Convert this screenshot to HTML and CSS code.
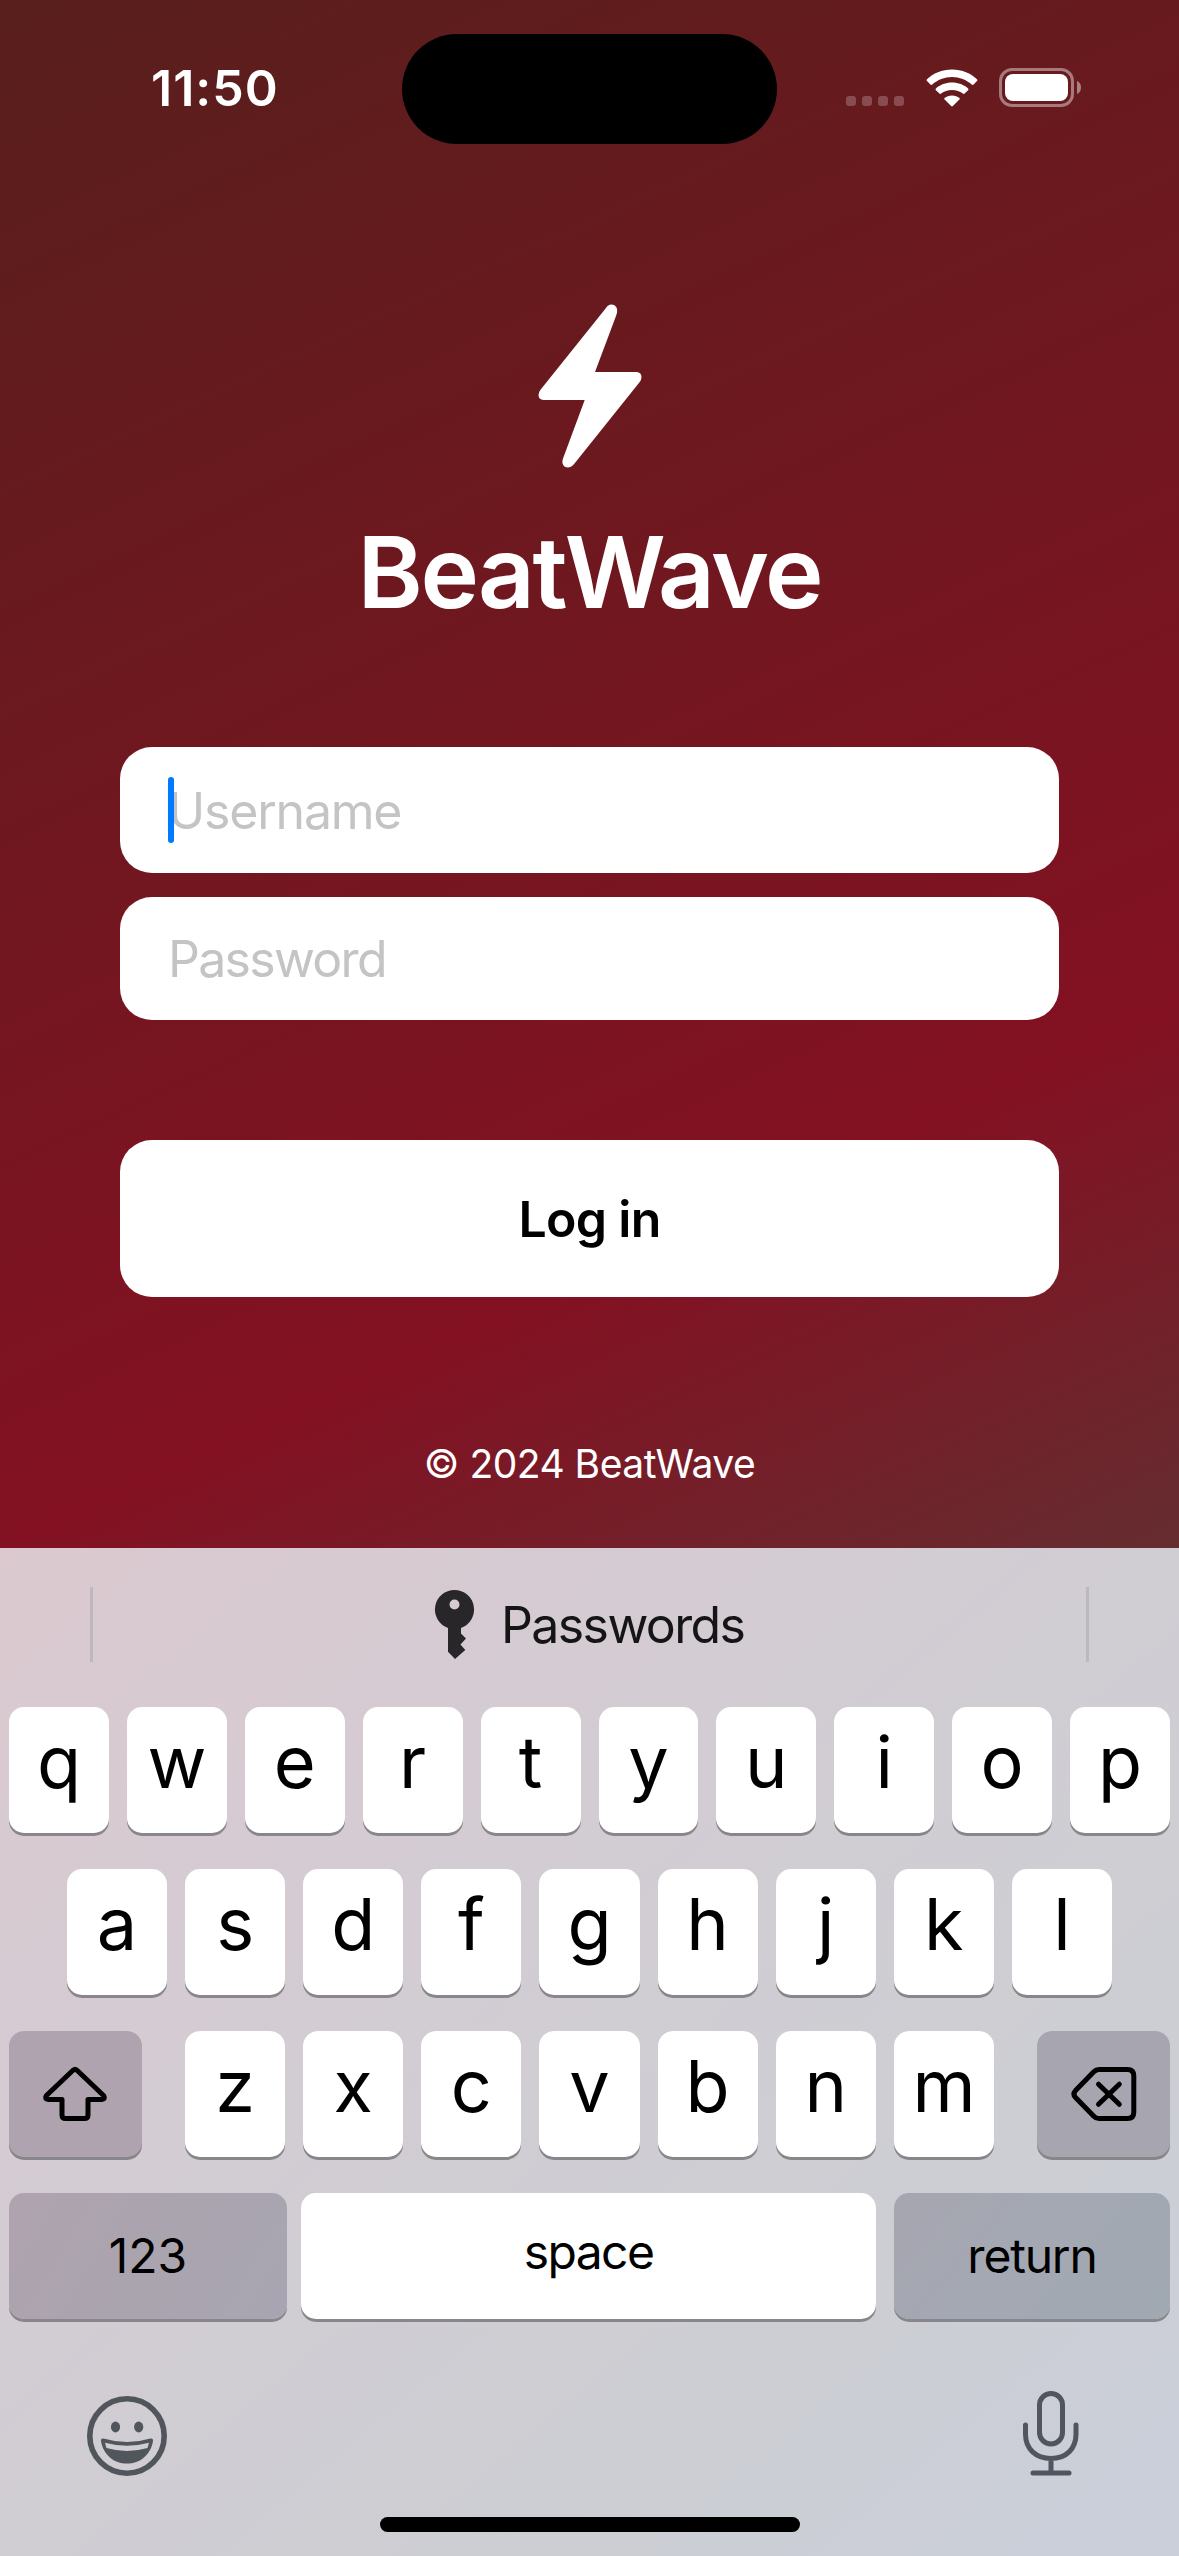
FILE: index.html
```html
<!DOCTYPE html>
<html lang="en">
<head>
<meta charset="utf-8">
<title>BeatWave</title>
<link rel="stylesheet" href="styles.css">
</head>
<body>
<div class="screen">
  <header class="status">
    <div class="time"><span>11:50</span></div>
    <div class="island"></div>
    <div class="indicators">
      <svg class="dots" viewBox="0 0 58 10"><rect width="10" height="10" rx="3.2"/><rect x="16" width="10" height="10" rx="3.2"/><rect x="32" width="10" height="10" rx="3.2"/><rect x="48" width="10" height="10" rx="3.2"/></svg>
      <svg class="wifi" viewBox="0 0 52 38"><path d="M26 .5C36 .5 45 4.400 51 10.300Q52 11.200 51 12.100L47.600 15.500Q46.700 16.400 45.700 15.500C40.500 10.900 33.500 8 26 8S11.500 10.900 6.300 15.500Q5.300 16.400 4.400 15.500L1 12.100Q0 11.200 1 10.300C7 4.400 16 .5 26 .5Z"/><path d="M26 13.500C32.300 13.500 38 15.700 42.100 19.400Q43 20.300 42.100 21.200L38.600 24.600Q37.800 25.400 36.800 24.600C34 22.300 30.200 21 26 21S18 22.300 15.200 24.600Q14.200 25.400 13.400 24.600L9.900 21.200Q9 20.300 9.900 19.400C14 15.700 19.700 13.500 26 13.500Z"/><path d="M26 26.500C29 26.500 31.500 27.400 33.400 28.900Q34.200 29.700 33.400 30.600L26.900 37Q26 37.800 25.100 37L18.600 30.600Q17.800 29.700 18.600 28.900C20.500 27.400 23 26.500 26 26.500Z"/></svg>
      <svg class="battery" viewBox="0 0 82 39"><rect class="shell" x="1.500" y="1.500" width="72" height="36" rx="11.500"/><rect x="6" y="6" width="63" height="27" rx="8"/><path class="nub" d="M78 13C80.600 14 82 16.500 82 19.500S80.600 25 78 26Z"/></svg>
    </div>
  </header>

  <main class="login">
    <svg class="bolt" viewBox="0 0 104 166"><path d="M69.300 2.300C73.500-1.800 80.500 1.200 79 8.500Q78.700 10 78 12L57 68H98.500Q103.500 68.300 103.500 73Q103.500 76 101.500 78.300L36.500 159.500C31.500 166.500 23.300 163.500 24.500 156.500Q24.800 155 25.300 153.700L46.700 96H5.500Q.5 95.600 .5 91Q.5 88.300 2.700 85.500L67 5.200Q68 3.700 69.300 2.300Z"/></svg>
    <h1 class="brand">BeatWave</h1>
    <div class="field user"><span class="caret"></span><span class="hint-user">Username</span></div>
    <div class="field pass"><span class="hint-pass">Password</span></div>
    <button class="submit"><span>Log in</span></button>
    <p class="legal">© 2024 BeatWave</p>
  </main>

  <section class="keyboard">
    <div class="suggest">
      <svg class="keyicon" viewBox="0 0 39 69"><path fill-rule="evenodd" d="M19.500 0A19.500 19.500 0 0 1 26 37.900V43.500L31 48.500L25.500 54.500L30.300 60L20 69L13 61.800V37.900A19.500 19.500 0 0 1 19.500 0ZM19.500 9.500A5 5 0 1 0 19.500 19.500A5 5 0 1 0 19.500 9.500Z"/></svg>
      <span>Passwords</span>
    </div>
    <div class="keys">
      <div class="row"><b class="key">q</b><b class="key">w</b><b class="key">e</b><b class="key">r</b><b class="key">t</b><b class="key">y</b><b class="key">u</b><b class="key">i</b><b class="key">o</b><b class="key">p</b></div>
      <div class="row second"><b class="key">a</b><b class="key">s</b><b class="key">d</b><b class="key">f</b><b class="key">g</b><b class="key">h</b><b class="key">j</b><b class="key">k</b><b class="key">l</b></div>
      <div class="row third">
        <b class="key mod shift"><svg viewBox="0 0 64 54"><path d="M30 3.300Q32 1.600 34 3.300L60.800 28.800Q62.800 32.300 58.500 32.500H45V48Q45 51.600 41.400 51.600H22.600Q19 51.600 19 48V32.500H5.500Q1.200 32.300 3.200 28.800Z"/></svg></b>
        <div class="letters"><b class="key">z</b><b class="key">x</b><b class="key">c</b><b class="key">v</b><b class="key">b</b><b class="key">n</b><b class="key">m</b></div>
        <b class="key mod delete"><svg viewBox="0 0 66 54"><path d="M28 2.500H56.500Q62.800 2.500 62.800 8.800V45.200Q62.800 51.500 56.500 51.500H28Q25 51.500 22.800 49.200L4.300 30.200Q1.500 27 4.300 23.800L22.800 4.800Q25 2.500 28 2.500ZM27.500 17.200L48.300 37.300M48.300 17.200L27.500 37.300"/></svg></b>
      </div>
      <div class="row fourth"><b class="key mod numbers">123</b><b class="key space">space</b><b class="key mod return">return</b></div>
    </div>
    <div class="tools">
      <svg class="emoji" viewBox="0 0 80 80"><circle class="ring" cx="40" cy="40" r="37.200"/><ellipse cx="28.500" cy="31" rx="4.600" ry="5.400"/><ellipse cx="51.700" cy="31" rx="4.600" ry="5.400"/><path fill-rule="evenodd" d="M16.500 42.500Q40 49.500 63.500 42.500Q66.500 42.200 66 45.200C63.500 59 53 67.500 40 67.500S16.500 59 14 45.200Q13.500 42.200 16.500 42.500ZM18 46.800L19.500 52Q40 58 60.500 52L62 46.800Q40 52.800 18 46.800Z"/></svg>
      <svg class="mic" viewBox="0 0 56 85"><rect x="16.500" y="2.500" width="23" height="50.500" rx="11.500"/><path d="M2.500 34V43C2.500 58 13 67.500 28 67.500S53 58 53 43V34M28 68V81M10 82H46"/></svg>
    </div>
    <div class="home"></div>
  </section>
</div>
</body>
</html>
```

FILE: styles.css
```css
* { box-sizing: border-box; }
body { margin: 0; }
.screen {
  width: 1179px;
  height: 2556px;
  display: flex;
  flex-direction: column;
  overflow: hidden;
  font-family: Inter, "Liberation Sans", sans-serif;
  background: linear-gradient(155.24deg, #581f1c 0%, #831122 50%, #2d614a 100%);
}
svg { display: block; flex: none; overflow: visible; }

.status { height: 177px; padding-top: 34px; display: grid; grid-template-columns: 402px 375px 402px; }
.time { height: 110px; padding-left: 151px; line-height: 109px; font-size: 50px; font-weight: 600; color: #fff; white-space: nowrap; letter-spacing: 1px; }
.island { height: 110px; border-radius: 55px; background: #000; }
.indicators { height: 110px; padding-left: 69px; display: flex; align-items: flex-start; fill: #fff; }
.dots { width: 58px; height: 10px; margin: 62px 22px 0 0; opacity: .22; }
.wifi { width: 52px; height: 38px; margin: 35px 21px 0 0; }
.battery { width: 82px; height: 39px; margin-top: 34px; }
.shell { fill: none; stroke: #fff; stroke-width: 3; opacity: .42; }
.nub { opacity: .45; }

.login { height: 1371px; padding: 127px 120px 0; display: flex; flex-direction: column; align-items: stretch; }
.bolt { width: 104px; height: 166px; align-self: center; fill: #fff; }
.brand { margin: 42px 0 0; height: 120px; line-height: 120px; font-size: 99px; font-weight: 600; color: #fff; text-align: center; letter-spacing: -2.2px; }
.field { position: relative; border-radius: 32px; background: #fff; padding-left: 48px; display: flex; align-items: center; font-size: 50px; color: #c4c4c6; }
.user { margin-top: 115px; height: 126px; padding-top: 2px; }
.pass { margin-top: 24px; height: 123px; }
.hint-user { letter-spacing: -1.2px; }
.hint-pass { letter-spacing: -1.7px; }
.caret { position: absolute; left: 48px; top: 30px; width: 6px; height: 66px; border-radius: 3px; background: #007aff; z-index: 1; }
.submit { margin: 120px 0 0; padding: 0; height: 157px; border: 0; border-radius: 32px; background: #fff; color: #000; font: 600 50px Inter, sans-serif; letter-spacing: -0.7px; }
.legal { margin: 137px 0 0; height: 60px; line-height: 60px; font-size: 39px; color: #fff; text-align: center; letter-spacing: -0.5px; }

.keyboard {
  height: 1008px;
  display: flex;
  flex-direction: column;
  background: linear-gradient(140deg, #dbc9cf 0%, #d5cbd3 28%, #d0cdd3 50%, #cdced3 70%, #cacfda 100%);
}
.suggest { margin: 39px 90px 0; height: 75px; border: solid #bfb7be; border-width: 0 3px; display: flex; padding-left: 342px; font-size: 50px; line-height: 76px; color: #151515; letter-spacing: -1.6px; }
.keyicon { width: 39px; height: 69px; margin: 3px 27px 0 0; fill: #282628; }
.keys { margin-top: 45px; padding: 0 9px; display: flex; flex-direction: column; gap: 36px; }
.row { display: flex; height: 126px; gap: 18px; }
.second { padding: 0 58px; }
.third { justify-content: space-between; }
.letters { display: flex; gap: 18px; width: 809px; }
.key { flex: 1 1 0; min-width: 0; height: 126px; padding-bottom: 18px; border-radius: 15px; background: #fff; box-shadow: 0 3px 0 #88868a; color: #000; font-size: 72px; font-weight: 400; display: flex; align-items: center; justify-content: center; }
.mod { padding-bottom: 2px; font-size: 48px; }
.shift, .delete { flex: 0 0 133px; padding-bottom: 0; }
.shift { background: #aea3af; }
.delete { background: #a6a5b0; }
.key svg { fill: none; stroke: #000; stroke-width: 5; stroke-linecap: round; stroke-linejoin: round; }
.shift svg { width: 64px; height: 54px; margin-left: -2px; }
.delete svg { width: 66px; height: 54px; }
.fourth { gap: 0; }
.numbers { flex: 0 0 278px; background: linear-gradient(120deg, #afa3ae, #aaa4ae 50%, #a8a5b2); }
.space { flex: 0 0 575px; margin: 0 18px 0 14px; padding-bottom: 9px; font-size: 48px; letter-spacing: -1.6px; }
.return { background: linear-gradient(130deg, #a6a5b0, #a4a8b2 40%, #a0a8b2); letter-spacing: -1.2px; }

.tools { margin-top: 72px; padding: 0 100px 0 87px; height: 85px; display: flex; justify-content: space-between; }
.emoji { width: 80px; height: 80px; margin-top: 5px; fill: #50565c; }
.ring { fill: none; stroke: #50565c; stroke-width: 5.6; }
.mic { width: 56px; height: 85px; fill: none; stroke: #50555f; stroke-width: 5; stroke-linecap: round; }
.home { width: 420px; height: 15px; margin: 41px auto 0; border-radius: 8px; background: #000; }
```
